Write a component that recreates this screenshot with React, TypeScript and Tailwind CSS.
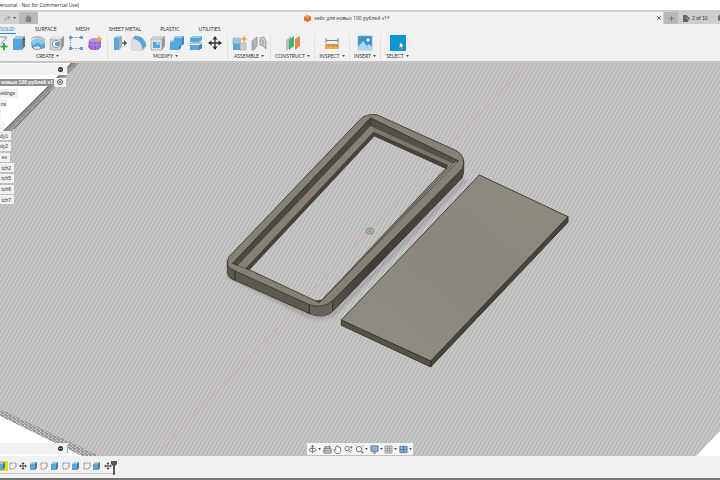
import type { ReactNode } from 'react'

// ---------- Icons ----------
const BLUE = '#56a6dc'
const DEEP = '#3787c0'
const LIGHT = '#8fc9ec'

function Icon({ children }: { children: ReactNode }) {
  return (
    <svg viewBox="0 0 16 16" className="size-4 shrink-0" aria-hidden="true">
      {children}
    </svg>
  )
}

const SketchIcon = () => (
  <Icon>
    <path d="M1 2h14M1 2v10h7M15 2 9 9" fill="none" stroke="#8b9299" strokeWidth="1" />
    <path d="M12 8v7M8.500 11.500h7" stroke="#2fa84f" strokeWidth="2" />
  </Icon>
)
const ExtrudeIcon = () => (
  <Icon>
    <path d="M2 4 5 1h9v10l-3 4H2z" fill={LIGHT} />
    <path d="M2 4h9v11H2z" fill={BLUE} />
    <path d="M11 4 14 1v10l-3 4z" fill="#7d8790" />
    <path d="M13 12V3M12 5l1-2 1 2" stroke="#4c5560" fill="none" />
  </Icon>
)
const RevolveIcon = () => (
  <Icon>
    <path d="M1 8c1-6 13-6 14 0v5l-4 1c-1-3-4-3-6-2l-3 1z" fill={BLUE} />
    <path d="M1 8c1-6 13-6 14 0l-4 2C9 7 7 7 4 10z" fill={LIGHT} />
    <path d="M2 12c2 3 7 3 10 1" stroke="#6a737c" fill="none" strokeWidth=".8" />
    <path d="M1 4c4-3 10-3 14 1" stroke="#8a939b" fill="none" />
  </Icon>
)
const HoleIcon = () => (
  <Icon>
    <path d="M1 4 4 1h11v10l-3 4H1z" fill="#9a9a9a" />
    <path d="M1 4h11v11H1z" fill="#d2d2d2" stroke="#8d8d8d" strokeWidth=".5" />
    <path d="M1 4 4 1h11l-3 3z" fill="#e4e4e4" />
    <circle cx="7" cy="9" r="3.6" fill="#fff" stroke="#6e7880" strokeWidth=".8" />
    <circle cx="8" cy="9" r="2.3" fill={BLUE} />
  </Icon>
)
const PatternIcon = () => (
  <Icon>
    <path d="M4 2.500h8M2.500 4v8M4 13.500h8" stroke="#858c92" strokeWidth=".8" strokeDasharray="2 1" />
    <path d="M1 1h3v3H1zM12 1h3v3h-3zM1 12h3v3H1zM12 12h3v3h-3z" fill={BLUE} />
  </Icon>
)
const FormIcon = () => (
  <Icon>
    <path d="M2 5 6 3h6l2 3v6l-3 3H4l-3-3z" fill="#9667cc" />
    <path d="M2 5 6 3h6l2 3-4 1H3z" fill="#b592e2" />
    <path d="M1 10h13M6 7v8M10 6v9" stroke="#c4a5ea" strokeWidth=".6" />
    <path d="m12 0 1 3 3 1-3 1-1 3-1-3-3-1 3-1z" fill="#f0a52d" />
  </Icon>
)
const PressPullIcon = () => (
  <Icon>
    <path d="M2 3 5 1h5v11l-3 3H2z" fill="#a6adb3" />
    <path d="M2 3h5v12H2z" fill={BLUE} />
    <path d="M2 3 5 1h5L7 3z" fill={LIGHT} />
    <path d="M10 8h3" stroke="#4c5560" strokeWidth="1.3" />
    <path d="m12 5 3 3-3 3z" fill="#4c5560" />
  </Icon>
)
const FilletIcon = () => (
  <Icon>
    <path d="M1 15V4l3-3c7 0 11 5 11 10l-3 4z" fill="#d2d2d2" stroke="#979797" strokeWidth=".6" />
    <path d="M4 1c7 0 11 5 11 10l-4 3C11 8 7 5 2 4z" fill={BLUE} />
    <path d="M1 15V4c6 0 10 4 10 11z" fill="#dedede" />
  </Icon>
)
const ShellIcon = () => (
  <Icon>
    <path d="M1 4 4 1h11v10l-3 4H1z" fill="#969ca1" />
    <path d="M1 4h11v11H1z" fill="#e0e0e0" stroke="#8d8d8d" strokeWidth=".6" />
    <path d="M1 4 4 1h11l-3 3z" fill="#cfcfcf" />
    <path d="M3 7h7v6H3z" fill={BLUE} />
    <path d="M6 7h4v3H6z" fill={LIGHT} />
  </Icon>
)
const CombineIcon = () => (
  <Icon>
    <path d="M5 3 7 1h8v8l-3 2v2l-2 2H1V7l2-2h2z" fill={DEEP} />
    <path d="M5 3h8v8h-3v4H1V7h4z" fill={BLUE} />
    <path d="m5 3 2-2h8l-2 2zM1 7l2-2h2v2z" fill={LIGHT} />
  </Icon>
)
const SplitIcon = () => (
  <Icon>
    <path d="M2 3 5 1h9v4l-3 2H2z" fill={BLUE} />
    <path d="M2 3 5 1h9l-3 2z" fill={LIGHT} />
    <path d="m1 9 3-2h11l-3 2z" fill="#b3bac0" />
    <path d="M2 10h9l3-1v4l-3 2H2z" fill={BLUE} />
    <path d="m11 10 3-1v4l-3 2z" fill={DEEP} />
  </Icon>
)
const MoveIcon = () => (
  <Icon>
    <path d="M8 2v12M2 8h12" stroke="#333" strokeWidth="1.3" />
    <path d="m8 1 2.500 3.500h-5zM8 15l2.500-3.500h-5zM1 8l3.500-2.500v5zM15 8l-3.500-2.500v5z" fill="#333" />
  </Icon>
)
const ComponentIcon = () => (
  <Icon>
    <path d="M1 3h7v6H1z" fill="#b8bdc2" stroke="#868d94" strokeWidth=".5" />
    <path d="M1 9h7v6H1z" fill={BLUE} />
    <path d="M1 5 3 3h6v4H1z" fill={LIGHT} />
    <path d="M8 8h6v7H8z" fill="#cbd0d4" stroke="#868d94" strokeWidth=".5" />
    <path d="m12 0 1 3 3 1-3 1-1 3-1-3-3-1 3-1z" fill="#f0a52d" />
  </Icon>
)
const JointIcon = () => (
  <Icon>
    <path d="M1 6 6 2v9l-3 4H1z" fill="#b5babe" stroke="#7f868c" strokeWidth=".7" />
    <path d="m9 3 4-1 2 4v8l-3-3-3-1z" fill="#c9cdd0" stroke="#7f868c" strokeWidth=".7" />
    <path d="M3 8v5M12 5v5" stroke="#9aa1a7" />
  </Icon>
)
const ConstructIcon = () => (
  <Icon>
    <path d="m1 5 5-4v11l-5 4z" fill="#b9bec2" />
    <path d="m4 5 5-4v10l-5 4z" fill="#45b36b" />
    <path d="m10 4 5-3v10l-5 4z" fill="#e58a4e" />
  </Icon>
)
const InspectIcon = () => (
  <Icon>
    <path d="M2 3v5M14 3v5M2 5.500h12" stroke="#7e858b" fill="none" />
    <path d="M1 9h14v5H1z" fill="#eab04a" />
    <path d="M3 9v2M5 9v3M7 9v2M9 9v3M11 9v2M13 9v3" stroke="#8b6628" strokeWidth=".6" />
  </Icon>
)
const InsertIcon = () => (
  <Icon>
    <path d="M1 1h14v14H1z" fill="#3f93cf" stroke="#86a9c0" strokeWidth=".6" />
    <path d="m1 12 5-6 4 5 2-2 3 3v3H1z" fill="#a7d8f5" />
    <circle cx="11" cy="5" r="1.500" fill="#fff" />
  </Icon>
)

const MODES = ['SURFACE', 'MESH', 'SHEET METAL', 'PLASTIC', 'UTILITIES']

const GROUPS: { name: string; box: string; icons: ReactNode[] }[] = [
  {
    name: 'CREATE',
    box: 'w-[108px] [&>button]:mr-2 [&>div]:justify-end pr-1',
    icons: [<SketchIcon />, <ExtrudeIcon />, <RevolveIcon />, <HoleIcon />, <PatternIcon />, <FormIcon />],
  },
  {
    name: 'MODIFY',
    box: 'w-[120px] [&>div]:justify-end pr-1',
    icons: [<PressPullIcon />, <FilletIcon />, <ShellIcon />, <CombineIcon />, <SplitIcon />, <MoveIcon />],
  },
  { name: 'ASSEMBLE', box: 'w-[43px] [&>div]:justify-center', icons: [<ComponentIcon />, <JointIcon />] },
  { name: 'CONSTRUCT', box: 'w-[44px] [&>div]:justify-center', icons: [<ConstructIcon />] },
  { name: 'INSPECT', box: 'w-[35px] [&>div]:justify-center', icons: [<InspectIcon />] },
  { name: 'INSERT', box: 'w-[31px] [&>div]:justify-center', icons: [<InsertIcon />] },
]

const TREE = [
  { text: 'ettings', w: 'w-[18px] pr-[3px]' },
  { text: 'ns', w: 'w-[7px] pr-px' },
  { text: '', w: 'w-[1px]' },
  { text: '', w: 'w-[4px]' },
  { text: 'dy1', w: 'w-[11px] pr-[3px]' },
  { text: 'dy2', w: 'w-[11px] pr-[3px]' },
  { text: 'es', w: 'w-[10px] pr-[3px]' },
  { text: 'tch2', w: 'w-[14px] pr-[3px]' },
  { text: 'tch5', w: 'w-[14px] pr-[3px]' },
  { text: 'tch6', w: 'w-[14px] pr-[3px]' },
  { text: 'tch7', w: 'w-[14px] pr-[3px]' },
]

type Step = 'extrude' | 'sketch' | 'move'
const STEPS: Step[] = [
  'extrude', 'sketch', 'move', 'extrude', 'sketch', 'extrude',
  'sketch', 'extrude', 'sketch', 'extrude', 'move',
]

function Caret() {
  return (
    <svg viewBox="0 0 4 3" className="h-[2px] w-[3px] shrink-0" aria-hidden="true">
      <path d="M0 0h4L2 3z" fill="#444" />
    </svg>
  )
}

function StepIcon({ step }: { step: Step }) {
  return (
    <svg viewBox="0 0 8 8" className="size-2" aria-hidden="true">
      {step === 'extrude' && (
        <>
          <path d="M0 2 2 0h5v6L5 8H0z" fill={LIGHT} />
          <path d="M0 2h5v6H0z" fill={BLUE} />
          <path d="m5 2 2-2v6L5 8z" fill="#57758c" />
        </>
      )}
      {step === 'sketch' && (
        <>
          <path d="M1 1h6M1 1v6h4M7 1v3" stroke="#777f86" fill="none" strokeWidth=".8" strokeDasharray="2 .5" />
          <path d="M5 7 8 3" stroke="#e09a4b" strokeWidth="1.2" />
        </>
      )}
      {step === 'move' && (
        <>
          <path d="M4 1v6M1 4h6" stroke="#444" strokeWidth=".9" />
          <path d="m4 0 1.500 2h-3zM4 8l1.500-2h-3zM0 4l2-1.500v3zM8 4 6 2.500v3z" fill="#444" />
        </>
      )}
    </svg>
  )
}

// ---------- 3D canvas ----------
function Scene() {
  return (
    <svg viewBox="0 63 720 393" preserveAspectRatio="xMidYMid slice" className="size-full" aria-hidden="true">
      <defs>
        <pattern id="grid" width="4" height="7" patternUnits="userSpaceOnUse">
          <rect width="4" height="7" fill="#b9b9b9" />
          <path d="M-4 14 8-7M-8 14 4-7M0 14 12-7" stroke="#cccccc" strokeWidth="1.300" />
        </pattern>
        <pattern id="edge" width="4" height="3" patternUnits="userSpaceOnUse">
          <rect width="4" height="3" fill="#b5b5b5" />
          <path d="M0 1h2M2 2h2" stroke="#777" strokeWidth="1" />
          <path d="M3 0h1M0 2h1" stroke="#eee" strokeWidth="1" />
        </pattern>
        <linearGradient id="plate" x1="1" y1="0" x2="0" y2="1">
          <stop offset="0" stopColor="#8e8a80" />
          <stop offset=".5" stopColor="#8a867d" />
          <stop offset="1" stopColor="#918d84" />
        </linearGradient>
        <linearGradient id="side" x1="0" y1="1" x2="1" y2="0">
          <stop offset="0" stopColor="#57534b" />
          <stop offset=".3" stopColor="#3f3c36" />
          <stop offset="1" stopColor="#4d4941" />
        </linearGradient>
        <filter id="soft">
          <feGaussianBlur stdDeviation="5" />
        </filter>
      </defs>

      <rect y="62" width="720" height="394" fill="url(#grid)" />
      <path d="M0 62h74L0 136z" fill="#fff" />
      <path d="m77 61-76 76" stroke="#8f8f8f" strokeWidth="6" />
      <path d="m75 60-74 74M50 92l-36 37" stroke="#6c6c6c" strokeWidth="1" />
      <path d="m78 62-72 72" stroke="#b9b9b9" strokeWidth="1" strokeDasharray="5 2" />
      <path d="M0 412 92 456H0z" fill="#fff" />
      <path d="m0 409 99 47H82L0 416z" fill="url(#edge)" />
      <path d="M720 431v25h-24z" fill="#fff" />

      <path d="M529 62 156 456" stroke="#dda3a3" strokeWidth=".8" />
      <path d="m67 88 653 308" stroke="#a3d0a3" strokeWidth=".8" />

      {/* frame */}
      <g transform="translate(210 100) scale(.3333)" strokeLinejoin="round">
        <path d="M50 525 300 650q50 10 80-15l385-395" fill="none" stroke="#777" strokeWidth="12" opacity=".4" filter="url(#soft)" />
        <path d="M52 480v38q4 18 23 23l223 100q42 18 72-8l385-398q8-10 6-55L368 596 298 606 75 505z" fill="#5d5951" stroke="#35322d" strokeWidth="2.500" />
        <path d="M368 600v34l387-398q8-10 6-50z" fill="url(#side)" />
        <path d="M298 612v29q42 16 70-8v-31z" fill="#67635a" />
        <path
          fillRule="evenodd"
          d="M57 470 447 62q18-22 53-18l237 107q34 18 20 55L368 602q-30 26-70 12L75 513q-34-12-18-43zM68 490l47 18 213 100L745 183 482 54z"
          fill="#858177"
          stroke="#35322d"
          strokeWidth="2.500"
        />
        {/* inner walls */}
        <path d="M68 490 482 54v24L84 496z" fill="#4d4941" stroke="#302e29" strokeWidth="2" />
        <path d="m482 54 263 129-18 8L482 78z" fill="#55514a" stroke="#302e29" strokeWidth="2" />
        {/* ledge */}
        <path d="M482 78 84 496l24 9L490 97z" fill="#858177" />
        <path d="m482 78 246 112-16 8L490 97z" fill="#7b776d" />
        <path d="m712 198 30-14-414 424z" fill="#858177" />
        <path d="m108 505 382-408 222 99-3 10-216-98-375 401z" fill="#46433c" stroke="#302e29" strokeWidth="2" />
        <path d="M712 200 328 608M728 191 340 598" fill="none" stroke="#45423b" strokeWidth="2" />
        <path d="M75 513v27M298 614v28M368 603v30" stroke="#292722" strokeWidth="2.500" />
      </g>

      {/* lid */}
      <g transform="translate(330 160) scale(.3333)" strokeLinejoin="round" stroke="#2f2d28" strokeWidth="2.500">
        <path d="m34 480 268 123v18L34 496z" fill="#55524a" />
        <path d="m302 603 412-433v17L302 621z" fill="#47443d" />
        <path d="m448 45 266 125-412 433L34 480z" fill="url(#plate)" />
      </g>

      {/* origin */}
      <ellipse cx="370" cy="231" rx="4" ry="3" fill="#b7beb5" stroke="#7f8a7b" strokeWidth="1" />
      <path d="M368 231h4M370 229v4" stroke="#7c8a77" strokeWidth=".8" />
    </svg>
  )
}

function PanelBar({ title }: { title: string }) {
  return (
    <div className="flex h-[11px] w-[68px] items-center justify-end gap-1 bg-[#f1f1f1]">
      <button aria-label={title} className="flex size-[5px] items-center justify-center rounded-full bg-[#333]">
        <span className="h-px w-[3px] bg-[#999]" />
      </button>
      <span className="h-2 w-px bg-[#aaa]" />
    </div>
  )
}

const NAV: { name: string; menu: boolean; art: ReactNode }[] = [
  { name: 'Orbit', menu: true, art: <><path d="M5 0v9M3 2.500 5 .500l2 2" /><ellipse cx="5" cy="5.500" rx="4" ry="1.800" /></> },
  { name: 'Look at', menu: false, art: <><path d="M1 4h8v5H1zM2 4V2h6v2M3 1v1M7 1v1" fill="#ddd" /><path d="M1 6.500h8" /></> },
  { name: 'Pan', menu: false, art: <path d="M3.500 9.500 1 6V5h1l1 1V2h1V1h1.500v1H7v1h1.500v4L7 9.500z" fill="#fff" /> },
  { name: 'Zoom', menu: false, art: <><circle cx="3.500" cy="4" r="2.500" /><path d="m5 6 3 3M8 1v3M6.500 2.500h3M7 6h2" /></> },
  { name: 'Fit', menu: true, art: <><circle cx="4.500" cy="4.500" r="3" /><path d="m7 7 2 2" strokeWidth="1.500" /><path d="M0 2V0h2M8 0h1v2" strokeWidth=".5" /></> },
  { name: 'Display', menu: true, art: <><path d="M1 1h8v6H1z" fill="#8fb2d8" stroke="#596a7c" /><path d="M3 9h4M5 7v2" /></> },
  { name: 'Grid', menu: true, art: <path d="M1 1h8v8H1zM1 4h8M1 6.500h8M4 1v8M6.500 1v8" fill="#d6d6d6" stroke="#777" strokeWidth=".6" /> },
  { name: 'Viewports', menu: true, art: <path d="M1 1.500h8v7H1zM5 1v8M1 5h8" fill="#8fb2d8" stroke="#4e6e98" /> },
]

export default function App() {
  return (
    <div className="flex h-screen flex-col overflow-hidden bg-[#f1f1f1] font-[Lato,sans-serif] text-[5px] leading-[6px] text-[#333]">
      <header className="h-[10px] shrink-0 bg-white font-['Open_Sans',sans-serif] leading-[10px] whitespace-nowrap text-[#222]">
        ersonal - Not for Commercial Use)
      </header>

      {/* document tabs */}
      <div className="flex h-[14px] shrink-0 border-t-2 border-[#cdcdcd] bg-[#cdcdcd]">
        <button aria-label="Redo" className="flex w-[19px] items-center justify-center gap-[2px] bg-[#d2d2d2]">
          <svg viewBox="0 0 8 8" className="size-[7px]">
            <path d="M1 7c0-4 2-4 5-4M4 1l3 2-3 2" stroke="#999" fill="none" />
          </svg>
          <Caret />
        </button>
        <button aria-label="Home" className="flex w-[19px] items-center justify-center bg-[#b9b9b9]">
          <svg viewBox="0 0 8 8" className="size-[7px]">
            <path d="m0 4 4-4 4 4H7v4H1V4z" fill="#858585" />
          </svg>
        </button>
        <div className="flex flex-1 items-center bg-[#f1f1f1] pr-[2px]">
          <div className="flex flex-1 items-center justify-center gap-[3px] font-['Open_Sans',sans-serif]">
            <svg viewBox="0 0 8 8" className="size-[7px]">
              <path d="m4 0 4 2v4L4 8 0 6V2z" fill="#e46f25" />
              <path d="m4 0 4 2-4 2-4-2z" fill="#f79a58" />
            </svg>
            <span>кейс для новых 100 рублей v1*</span>
          </div>
          <button aria-label="Close" className="flex w-[5px] justify-center">
            <svg viewBox="0 0 4 4" className="size-1">
              <path d="m0 0 4 4M4 0 0 4" stroke="#555" strokeWidth=".8" />
            </svg>
          </button>
        </div>
        <button aria-label="New" className="ml-px flex w-[14px] items-center justify-center bg-[#b8b8b8]">
          <svg viewBox="0 0 8 8" className="size-[7px]">
            <path d="M4 1v6M1 4h6" stroke="#777" />
          </svg>
        </button>
        <div className="flex w-[42px] items-center gap-[2px] pl-[5px]">
          <svg viewBox="0 0 8 8" className="size-[7px]">
            <path d="M0 0h4l4 4-3 4H0z" fill="#666" />
            <path d="m4 3 2 2" stroke="#ddd" />
          </svg>
          <span className="flex-1 whitespace-nowrap">2 of 10</span>
          <span className="h-[6px] w-[2px] rounded-l-full bg-[#666]" />
        </div>
      </div>

      {/* toolbar */}
      <div className="h-[39px] shrink-0 border-b-2 border-[#c4c4c4]">
        <nav className="flex h-[10px] items-stretch gap-[19px] whitespace-nowrap">
          <button className="w-4 border-b border-[#1a8acb] text-left text-[#1a8acb]">SOLID</button>
          {MODES.map((m) => (
            <button key={m}>{m}</button>
          ))}
        </nav>
        <div className="flex h-[26px]">
          {GROUPS.map((g) => (
            <div key={g.name} className={`flex shrink-0 flex-col border-r border-[#e2e2e2] pt-px ${g.box}`}>
              <div className="flex gap-[3px]">
                {g.icons.map((icon, i) => (
                  <button key={i} aria-label={`${g.name} ${i + 1}`}>{icon}</button>
                ))}
              </div>
              <button className="flex h-[9px] items-center justify-center gap-[2px]">
                {g.name} <Caret />
              </button>
            </div>
          ))}
          <div className="flex w-[33px] flex-col items-center pt-px">
            <button aria-label="Select tool" className="bg-[#0a96d2]">
              <Icon>
                <path d="m10 7 4 4-2 .500 1 3-1 .500-1-3-2 1z" fill="#fff" stroke="#345" strokeWidth=".4" />
              </Icon>
            </button>
            <button className="flex h-[9px] items-center gap-[2px]">
              SELECT <Caret />
            </button>
          </div>
        </div>
      </div>

      {/* viewport */}
      <main className="relative min-h-0 flex-1">
        <Scene />
        <aside className="absolute top-px left-0 flex flex-col gap-[2px]">
          <PanelBar title="Browser" />
          <ul className="flex h-[128px] flex-col font-['Liberation_Sans',sans-serif]">
            <li className="flex flex-1 items-center">
              <span className="flex h-[7px] w-[54px] items-center justify-end bg-[#8e8e8e] pr-px font-bold whitespace-nowrap text-white">
                новых 100 рублей v1
              </span>
              <label className="flex h-[9px] w-3 items-center justify-center bg-[#f4f4f4]">
                <input
                  type="radio"
                  defaultChecked
                  aria-label="Active component"
                  className="size-[6px] appearance-none rounded-full border border-[#555] bg-[#555] bg-clip-content p-px"
                />
              </label>
            </li>
            {TREE.map((row, i) => (
              <li key={i} className="flex flex-1 items-center">
                <span className={`flex h-[9px] items-center justify-end bg-[#f1f1f1] whitespace-nowrap ${row.w}`}>
                  {row.text}
                </span>
              </li>
            ))}
          </ul>
        </aside>
        <div className="absolute bottom-[2px] left-0">
          <PanelBar title="Comments" />
        </div>
        <div className="absolute bottom-px left-1/2 flex h-3 w-[106px] -translate-x-1/2 items-center justify-between bg-[#f4f4f4] px-px">
          {NAV.map((n) => (
            <button key={n.name} aria-label={n.name} className="flex items-center gap-px">
              <svg viewBox="0 0 10 10" className="size-[9px]" fill="none" stroke="#666" strokeWidth=".9">
                {n.art}
              </svg>
              {n.menu && <Caret />}
            </button>
          ))}
        </div>
      </main>

      {/* timeline */}
      <footer className="flex h-6 shrink-0 items-start border-b-2 border-[#757575] pt-[5px]">
        <ol className="-ml-[3px] flex w-[116px] border-b border-[#c9c9c9] pb-[2px]">
          {STEPS.map((s, i) => (
            <li key={i} className={`flex h-[10px] flex-1 items-center justify-center ${i === 0 ? 'bg-[#dbe600]' : ''}`}>
              <StepIcon step={s} />
            </li>
          ))}
        </ol>
        <svg viewBox="0 0 6 14" className="-ml-[2px] h-[14px] w-[6px]" aria-hidden="true">
          <path d="M0 0h6v3L4 5v9H2V5L0 3z" fill="#555" />
        </svg>
      </footer>
    </div>
  )
}
